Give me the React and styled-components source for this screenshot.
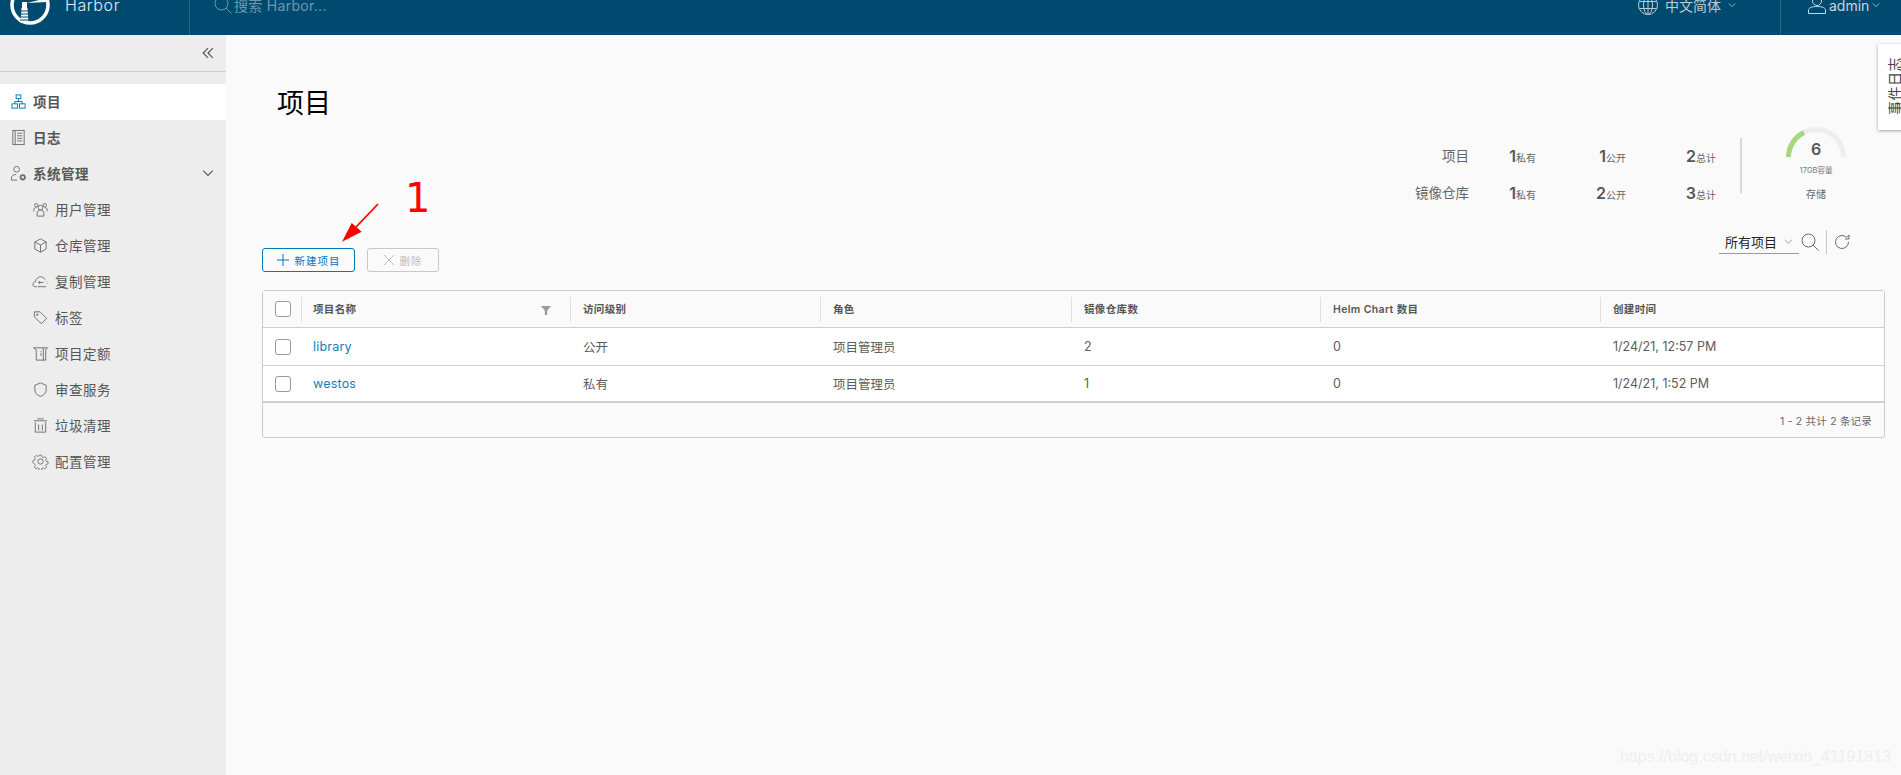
import React from "react";
import styled, { createGlobalStyle } from "styled-components";

const GlobalStyle = createGlobalStyle`
  html, body {
    margin: 0;
    padding: 0;
    height: 100%;
    overflow: hidden;
    background: #fafafa;
  }
  * {
    box-sizing: border-box;
  }
  body {
    font-family: Inter, "Noto Sans CJK SC", sans-serif;
    color: #565656;
  }
`;

const Page = styled.div`
  position: relative;
  width: 1901px;
  height: 775px;
  overflow: hidden;
  display: flex;
  flex-direction: column;
`;

/* the page was scrolled 25px when captured, so the 60px bar is cut at the top */
const Header = styled.header`
  height: 35px;
  flex: none;
  overflow: hidden;
  background: #004a70;
`;

const HeaderInner = styled.div`
  height: 60px;
  margin-top: -25px;
  display: flex;
  align-items: center;
  color: #fafafa;
`;

const Brand = styled.div`
  width: 190px;
  height: 60px;
  flex: none;
  display: flex;
  align-items: center;
  padding-left: 10px;
  gap: 15px;
  border-right: 1px solid #2a6786;
  font-size: 16px;
  letter-spacing: 0.6px;
  font-weight: 300;
  color: #e4edf2;
`;

const SearchBox = styled.div`
  flex: 1;
  display: flex;
  align-items: center;
  padding-left: 24px;
  gap: 2px;
  font-size: 14px;
  letter-spacing: 0.3px;
  color: #6f97ad;
`;

const Lang = styled.div`
  width: 143px;
  height: 60px;
  display: flex;
  align-items: center;
  gap: 7px;
  font-size: 14px;
  color: #b9cdd8;
  border-right: 1px solid #2a6786;
`;

const User = styled.div`
  width: 120px;
  display: flex;
  align-items: center;
  padding-left: 27px;
  gap: 3px;
  font-size: 14px;
  color: #c5d6df;
`;

const Body = styled.div`
  flex: 1;
  display: flex;
  min-height: 0;
`;

const Sidebar = styled.aside`
  width: 226px;
  flex: none;
  background: #ededed;
`;

const CollapseRow = styled.div`
  height: 37px;
  display: flex;
  align-items: center;
  justify-content: flex-end;
  padding-right: 12px;
  border-bottom: 1px solid #cfcfcf;
  margin-bottom: 12px;
  color: #565656;
`;

const NavItem = styled.div`
  height: 36px;
  display: flex;
  align-items: center;
  gap: 6px;
  padding: 0 12px 2px ${(p) => (p.$sub ? "32px" : "10px")};
  font-size: 13.5px;
  letter-spacing: 0.5px;
  font-weight: ${(p) => (p.$bold ? 600 : 400)};
  background: ${(p) => (p.$active ? "#ffffff" : "transparent")};
  color: #565656;
  svg.lead {
    color: ${(p) => (p.$active ? "#0079b8" : "#6f6f6f")};
    flex: none;
  }
`;

const Spacer = styled.span`
  flex: 1;
`;

const Main = styled.main`
  flex: 1;
  min-width: 0;
  padding: 0 16px 0 36px;
`;

const Title = styled.h1`
  margin: 0;
  padding: 49px 0 0 15px;
  height: 90px;
  font-size: 27px;
  line-height: 40px;
  font-weight: 400;
  color: #000;
`;

const StatsBar = styled.div`
  height: 105px;
  display: flex;
  justify-content: flex-end;
`;

const StatsGrid = styled.div`
  display: grid;
  grid-template-columns: 54px 67px 90px 90px;
  grid-auto-rows: 37px;
  margin-top: 13px;
`;

const StatLabel = styled.div`
  font-size: 13.5px;
  text-align: right;
  line-height: 37px;
  color: #666;
  white-space: nowrap;
`;

const StatValue = styled.div`
  text-align: right;
  line-height: 37px;
  font-size: 16px;
  font-weight: 600;
  color: #565656;
  white-space: nowrap;
  small {
    font-size: 10px;
    font-weight: 400;
    color: #666;
  }
`;

const GaugeWrap = styled.div`
  margin: 13px 0 0 24px;
  padding-left: 42px;
  width: 145px;
  height: 55px;
  border-left: 2px solid #d7d7d7;
`;

const Gauge = styled.div`
  position: relative;
  width: 64px;
  margin-top: -11px;
  text-align: center;
  svg {
    display: block;
    margin: 0 auto;
  }
`;

const GaugeNumber = styled.div`
  position: absolute;
  left: 0;
  right: 0;
  top: 13px;
  font-size: 16px;
  line-height: 18px;
  font-weight: 600;
  color: #565656;
`;

const GaugeCaption = styled.div`
  font-size: 7.5px;
  line-height: 10px;
  margin-top: 9px;
  color: #777;
  white-space: nowrap;
`;

const GaugeTitle = styled.div`
  font-size: 10px;
  line-height: 14px;
  margin-top: 11px;
  color: #666;
`;

const Toolbar = styled.div`
  height: 60px;
  display: flex;
  align-items: flex-start;
  justify-content: space-between;
`;

const Buttons = styled.div`
  display: flex;
  gap: 12px;
  padding-top: 18px;
`;

const Button = styled.button`
  height: 24px;
  width: ${(p) => p.$w}px;
  padding: 0;
  display: flex;
  align-items: center;
  justify-content: center;
  gap: 6px;
  font-family: inherit;
  font-size: 10.5px;
  letter-spacing: 1px;
  background: transparent;
  border-radius: 3px;
  border: 1px solid ${(p) => (p.disabled ? "#c8c8c8" : "#0079b8")};
  color: ${(p) => (p.disabled ? "#bdbdbd" : "#0079b8")};
`;

const Filters = styled.div`
  display: flex;
  align-items: center;
  height: 24px;
  padding-right: 35px;
`;

const FilterSelect = styled.div`
  width: 80px;
  height: 24px;
  padding-left: 6px;
  display: flex;
  align-items: center;
  gap: 7px;
  font-size: 13px;
  color: #222;
  border-bottom: 1px solid #9a9a9a;
  svg {
    color: #999;
  }
`;

const ToolIcon = styled.span`
  display: flex;
  margin-left: ${(p) => p.$ml || 0}px;
  color: #6a6a6a;
`;

const ToolDivider = styled.span`
  width: 1px;
  height: 24px;
  margin-left: 7px;
  background: #c4c4c4;
`;

const Grid = styled.div`
  width: 1623px;
  height: 148px;
  border: 1px solid #cccccc;
  border-radius: 3px;
  background: #fafafa;
  display: flex;
  flex-direction: column;
`;

const Row = styled.div`
  display: grid;
  grid-template-columns: 38px 269px 250px 251px 249px 280px 1fr;
  align-items: center;
  height: ${(p) => p.$h}px;
  flex: none;
  background: ${(p) => (p.$head ? "#fafafa" : "#ffffff")};
  border-bottom: ${(p) => (p.$last ? 2 : 1)}px solid #cfcfcf;
`;

const CheckCell = styled.div`
  display: flex;
  justify-content: flex-start;
  padding-left: 12px;
`;

const Checkbox = styled.span`
  display: block;
  width: 16px;
  height: 16px;
  border: 1px solid #9a9a9a;
  border-radius: 3px;
  background: #fff;
`;

const HeadCell = styled.div`
  height: 25px;
  line-height: 25px;
  padding: 0 19px 0 ${(p) => (p.$first ? 11 : 12)}px;
  font-size: 10.5px;
  font-weight: 600;
  letter-spacing: 0.35px;
  color: #565656;
  border-left: 1px solid #e0e0e0;
  display: flex;
  justify-content: space-between;
  align-items: center;
  svg {
    margin-top: 2px;
  }
`;

const Cell = styled.div`
  padding-left: ${(p) => (p.$first ? 12 : 13)}px;
  font-size: 12.5px;
  color: #5c5c5c;
`;

const LinkText = styled.a`
  color: #0a7fbe;
  font-size: 12.5px;
  letter-spacing: 0.2px;
`;

const GridFooter = styled.div`
  flex: 1;
  display: flex;
  align-items: center;
  justify-content: flex-end;
  padding-right: 12px;
  font-size: 10.5px;
  letter-spacing: 0.2px;
  color: #666;
`;

const EventTab = styled.div`
  position: absolute;
  top: 44px;
  left: 1878px;
  width: 36px;
  height: 86px;
  background: #fff;
  box-shadow: 0 1px 3px rgba(0, 0, 0, 0.35);
  display: flex;
  align-items: center;
  justify-content: flex-start;
`;

const EventLabel = styled.span`
  display: block;
  width: 20px;
  margin-left: 7px;
  transform: rotate(-90deg);
  white-space: nowrap;
  font-size: 14px;
  line-height: 20px;
  letter-spacing: 0.5px;
  color: #444;
  text-align: center;
  text-indent: -18px;
`;

const Annotation = styled.div`
  position: absolute;
  left: 405px;
  top: 175px;
  font-family: "DejaVu Sans", sans-serif;
  font-size: 40px;
  line-height: 47px;
  color: #ff0000;
`;

const ArrowMark = styled.svg`
  position: absolute;
  left: 335px;
  top: 200px;
`;

const Watermark = styled.div`
  position: absolute;
  right: 10px;
  bottom: 8px;
  font-family: "Liberation Sans", sans-serif;
  font-size: 16px;
  line-height: 20px;
  color: #eeeeee;
`;

function Icon({ children }) {
  return (
    <svg className="lead" width="17" height="17" viewBox="0 0 18 18" fill="none" stroke="currentColor" strokeWidth="1">
      {children}
    </svg>
  );
}

const icons = {
  projects: (
    <>
      <rect x="6.5" y="2" width="5" height="4" />
      <rect x="2" y="11.500" width="6" height="4.500" />
      <rect x="10" y="11.500" width="6" height="4.500" />
      <path d="M9 6v3M5 11.500V9h8v2.500" />
    </>
  ),
  logs: (
    <>
      <rect x="3" y="1.500" width="12" height="15" />
      <path d="M5.500 1.500v15M7.500 4.500h5.500M7.500 7.200h5.500M7.500 9.900h5.500M7.500 12.600h5.500" />
    </>
  ),
  admin: (
    <>
      <circle cx="7" cy="4.500" r="3" />
      <path d="M1.500 16v-2.500c0-2 2.500-3.500 5-3.500M1.500 16h6" />
      <circle cx="13.500" cy="13" r="2.300" strokeWidth="2" />
    </>
  ),
  users: (
    <>
      <circle cx="9" cy="7" r="2.500" />
      <circle cx="4.500" cy="4.500" r="1.800" />
      <circle cx="13.500" cy="4.500" r="1.800" />
      <path d="M5.500 16v-3c0-2 1.500-3.500 3.500-3.500s3.500 1.500 3.500 3.500v3zM2 11V9c0-1.200 1-2 2.500-2M16 11V9c0-1.200-1-2-2.500-2" />
    </>
  ),
  box: (
    <>
      <path d="M9 2l6 3.200v7.600L9 16l-6-3.200V5.200z" />
      <path d="M3 5.200L9 8.500l6-3.300M9 8.500V16" />
    </>
  ),
  cloud: (
    <>
      <path d="M5 14.500H3.200C1.800 14.500 1 13.300 1 12c0-1.500 1-2.500 2.500-2.700C4 6 6.500 4 9 4c2.200 0 4 1.200 4.800 3" />
      <path d="M6 14.500h9" />
      <path d="M12 10H7M8.500 8.500L7 10l1.500 1.500M15 8.500v.5M16.500 11v.5" />
    </>
  ),
  tag: (
    <>
      <path d="M2.500 3h6l7 7-5.500 5.500-7.500-7z" />
      <circle cx="5.500" cy="6" r="0.800" />
    </>
  ),
  quota: (
    <>
      <path d="M1.500 3h15l-2 2v11h-10V5z" />
      <path d="M12 3v13M9 7h1M9 11h1M9.500 8.500v2" />
    </>
  ),
  shield: <path d="M9 2l6 2.500v5c0 3.200-2.300 5.500-6 6.800-3.700-1.300-6-3.600-6-6.800v-5z" />,
  trash: <path d="M3.500 5.500V16h11V5.500M2 4h14M5.500 2h7M7 8v6M11 8v6" />,
  gear: (
    <>
      <circle cx="9" cy="9" r="2.800" />
      <path d="M7.600 1.500h2.800l.4 2.200 1.600.7 1.900-1.200 2 2-1.200 1.900.7 1.600 2.200.4v2.800l-2.200.4-.7 1.600 1.200 1.900-2 2-1.900-1.200-1.600.7-.4 2.200H7.600l-.4-2.200-1.600-.7-1.900 1.200-2-2 1.200-1.900-.7-1.600L0 10.400V7.600l2.200-.4.700-1.600L1.700 3.700l2-2 1.900 1.200 1.600-.7z" transform="translate(1 1) scale(0.89)" />
    </>
  ),
};

function Chevron({ size = 10, dir = "down" }) {
  return (
    <svg width={size} height={size} viewBox="0 0 10 10" fill="none" stroke="currentColor" strokeWidth="1">
      {dir === "down" ? <path d="M1 3l4 4 4-4" /> : <path d="M5 1L1 5l4 4M9 1L5 5l4 4" />}
    </svg>
  );
}

function Logo() {
  return (
    <svg width="40" height="40" viewBox="0 0 40 40">
      <circle cx="20" cy="20" r="18" fill="none" stroke="#fff" strokeWidth="3.500" />
      <path d="M12 17h5v6h-5z" fill="#fff" />
      <path d="M11.500 23h6l1 15h-8z" fill="#fff" />
      <path d="M11 26h8M10.500 29h9M10.500 32h9.500M10 35h10" stroke="#004a70" strokeWidth="1" />
      <path d="M17 18l20-1v-4z" fill="#fff" />
    </svg>
  );
}

function SearchIcon() {
  return (
    <svg width="18" height="18" viewBox="0 0 18 18" fill="none" stroke="currentColor" strokeWidth="1">
      <circle cx="7.500" cy="7.500" r="6.500" />
      <path d="M12 12l5.500 5.500" />
    </svg>
  );
}

const navItems = [
  { label: "用户管理", icon: "users" },
  { label: "仓库管理", icon: "box" },
  { label: "复制管理", icon: "cloud" },
  { label: "标签", icon: "tag" },
  { label: "项目定额", icon: "quota" },
  { label: "审查服务", icon: "shield" },
  { label: "垃圾清理", icon: "trash" },
  { label: "配置管理", icon: "gear" },
];

const stats = [
  { label: "项目", values: ["1", "1", "2"] },
  { label: "镜像仓库", values: ["1", "2", "3"] },
];

const statUnits = ["私有", "公开", "总计"];

const projects = [
  { name: "library", access: "公开", count: "2", created: "1/24/21, 12:57 PM" },
  { name: "westos", access: "私有", count: "1", created: "1/24/21, 1:52 PM" },
];

export default function App() {
  return (
    <Page>
      <GlobalStyle />
      <Header>
        <HeaderInner>
          <Brand>
            <Logo />
            Harbor
          </Brand>
          <SearchBox>
            <SearchIcon />
            搜索 Harbor...
          </SearchBox>
          <Lang>
            <svg width="20" height="20" viewBox="0 0 20 20" fill="none" stroke="currentColor" strokeWidth="1">
              <circle cx="10" cy="10" r="9.500" />
              <ellipse cx="10" cy="10" rx="4.500" ry="9.500" />
              <path d="M10 .5v19M1.500 6.500h17M1.500 13.500h17" />
            </svg>
            中文简体
            <Chevron size={8} />
          </Lang>
          <User>
            <svg width="18" height="18" viewBox="0 0 18 18" fill="none" stroke="currentColor" strokeWidth="1">
              <circle cx="9" cy="5" r="4.500" />
              <path d="M.5 17.500V14c0-2 3-3.500 8.500-3.500s8.500 1.500 8.500 3.500v3.500z" />
            </svg>
            admin
            <Chevron size={8} />
          </User>
        </HeaderInner>
      </Header>
      <Body>
        <Sidebar>
          <CollapseRow>
            <Chevron size={12} dir="left" />
          </CollapseRow>
          <NavItem $active $bold>
            <Icon>{icons.projects}</Icon>
            项目
          </NavItem>
          <NavItem $bold>
            <Icon>{icons.logs}</Icon>
            日志
          </NavItem>
          <NavItem $bold>
            <Icon>{icons.admin}</Icon>
            系统管理
            <Spacer />
            <Chevron size={12} />
          </NavItem>
          {navItems.map((item) => (
            <NavItem $sub key={item.label}>
              <Icon>{icons[item.icon]}</Icon>
              {item.label}
            </NavItem>
          ))}
        </Sidebar>
        <Main>
          <Title>项目</Title>
          <StatsBar>
            <StatsGrid>
              {stats.map((s) => (
                <React.Fragment key={s.label}>
                  <StatLabel>{s.label}</StatLabel>
                  {s.values.map((v, i) => (
                    <StatValue key={i}>
                      {v}
                      <small>{statUnits[i]}</small>
                    </StatValue>
                  ))}
                </React.Fragment>
              ))}
            </StatsGrid>
            <GaugeWrap>
              <Gauge>
                <svg width="60" height="30" viewBox="0 0 60 30" fill="none" strokeWidth="5">
                  <path d="M2.500 30a27.500 27.500 0 0 1 55 0" stroke="#eeeeee" />
                  <path d="M2.500 30A27.500 27.500 0 0 1 18 5.500" stroke="#a5d878" />
                </svg>
                <GaugeNumber>6</GaugeNumber>
                <GaugeCaption>17GB容量</GaugeCaption>
                <GaugeTitle>存储</GaugeTitle>
              </Gauge>
            </GaugeWrap>
          </StatsBar>
          <Toolbar>
            <Buttons>
              <Button $w={93}>
                <svg width="12" height="12" viewBox="0 0 12 12" stroke="currentColor" strokeWidth="1">
                  <path d="M6 0v12M0 6h12" />
                </svg>
                新建项目
              </Button>
              <Button $w={72} disabled>
                <svg width="10" height="10" viewBox="0 0 10 10" stroke="currentColor" strokeWidth="1">
                  <path d="M0 0l10 10M10 0L0 10" />
                </svg>
                删除
              </Button>
            </Buttons>
            <Filters>
              <FilterSelect>
                所有项目
                <Chevron size={9} />
              </FilterSelect>
              <ToolIcon $ml={2}>
                <SearchIcon />
              </ToolIcon>
              <ToolDivider />
              <ToolIcon $ml={7}>
                <svg width="16" height="16" viewBox="0 0 16 16" fill="none" stroke="currentColor" strokeWidth="1">
                  <path d="M14.500 8a6.500 6.500 0 1 1-2-4.700L15 1M15 1v4h-4" />
                </svg>
              </ToolIcon>
            </Filters>
          </Toolbar>
          <Grid>
            <Row $head $h={37}>
              <CheckCell>
                <Checkbox />
              </CheckCell>
              <HeadCell $first>
                项目名称
                <svg width="10" height="10" viewBox="0 0 10 10" fill="#999999">
                  <path d="M0 1h10L6.200 5.500V10H3.800V5.500z" />
                </svg>
              </HeadCell>
              <HeadCell>访问级别</HeadCell>
              <HeadCell>角色</HeadCell>
              <HeadCell>镜像仓库数</HeadCell>
              <HeadCell>Helm Chart 数目</HeadCell>
              <HeadCell>创建时间</HeadCell>
            </Row>
            {projects.map((p, i) => (
              <Row key={p.name} $h={i === 0 ? 38 : 37} $last={i === 1}>
                <CheckCell>
                  <Checkbox />
                </CheckCell>
                <Cell $first>
                  <LinkText>{p.name}</LinkText>
                </Cell>
                <Cell>{p.access}</Cell>
                <Cell>项目管理员</Cell>
                <Cell>{p.count}</Cell>
                <Cell>0</Cell>
                <Cell>{p.created}</Cell>
              </Row>
            ))}
            <GridFooter>1 - 2 共计 2 条记录</GridFooter>
          </Grid>
        </Main>
      </Body>
      <EventTab>
        <EventLabel>事件日志</EventLabel>
      </EventTab>
      <Annotation>1</Annotation>
      <ArrowMark width="50" height="46" viewBox="0 0 50 46">
        <path d="M43 4L21 27" stroke="#ff0000" strokeWidth="1.800" />
        <path d="M7 41.700L16.700 23 26.700 31.700z" fill="#ff0000" />
      </ArrowMark>
      <Watermark>https://blog.csdn.net/weixin_41191813</Watermark>
    </Page>
  );
}
